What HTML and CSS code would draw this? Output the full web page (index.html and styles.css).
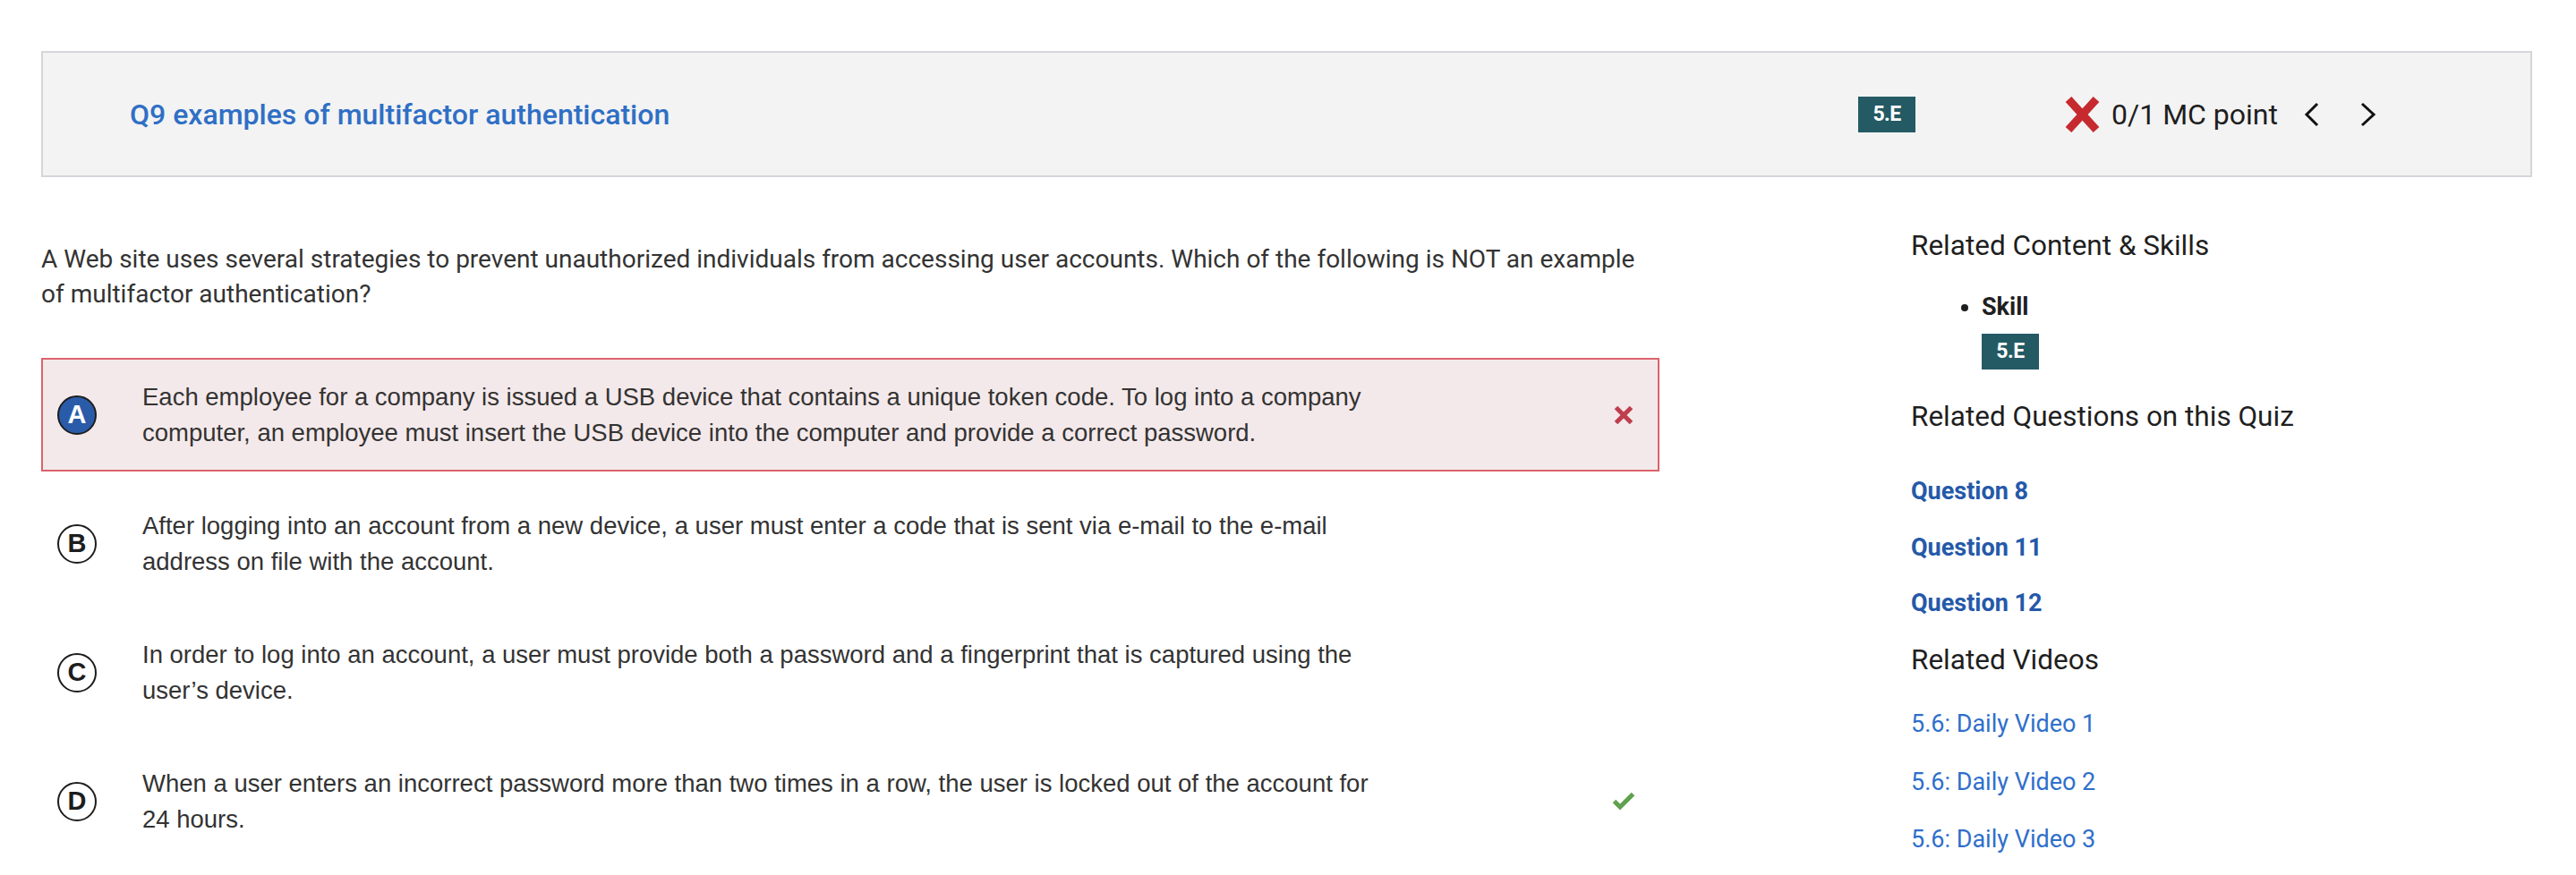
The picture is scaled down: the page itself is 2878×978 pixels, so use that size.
FILE: index.html
```html
<!DOCTYPE html>
<html lang="en">
<head>
<meta charset="utf-8">
<title>Q9 examples of multifactor authentication</title>
<link rel="stylesheet" href="styles.css">
</head>
<body>
<div class="page">
  <header class="qhead">
    <a class="qtitle" href="#">Q9 examples of multifactor authentication</a>
    <span class="badge">5.E</span>
    <div class="score">
      <svg class="score-x" width="39" height="40" viewBox="0 0 39 40"><path d="M4 3 L35 37 M35 3 L4 37" stroke="#c62a2f" stroke-width="9" fill="none"/></svg>
      <span class="score-text">0/1 MC point</span>
      <svg class="chev chev-left" width="21" height="28" viewBox="0 0 21 28"><polyline points="17,2 5,14 17,26" fill="none" stroke="#111" stroke-width="3"/></svg>
      <svg class="chev chev-right" width="18" height="28" viewBox="0 0 18 28"><polyline points="2,2 15,14 2,26" fill="none" stroke="#111" stroke-width="3"/></svg>
    </div>
  </header>

  <div class="content">
    <main class="main">
      <p class="stem">A Web site uses several strategies to prevent unauthorized individuals from accessing user accounts. Which of the following is NOT an example of multifactor authentication?</p>
      <div class="options">
        <div class="option option-wrong">
          <span class="letter letter-selected">A</span>
          <span class="opt-text">Each employee for a company is issued a USB device that contains a unique token code. To log into a company computer, an employee must insert the USB device into the computer and provide a correct password.</span>
          <svg class="mark" width="22" height="22" viewBox="0 0 22 22"><path d="M2.5 2.5 L19.5 19.5 M19.5 2.5 L2.5 19.5" stroke="#bf3e4d" stroke-width="5" fill="none"/></svg>
        </div>
        <div class="option">
          <span class="letter">B</span>
          <span class="opt-text">After logging into an account from a new device, a user must enter a code that is sent via e-mail to the e-mail address on file with the account.</span>
        </div>
        <div class="option">
          <span class="letter">C</span>
          <span class="opt-text">In order to log into an account, a user must provide both a password and a fingerprint that is captured using the user’s device.</span>
        </div>
        <div class="option">
          <span class="letter">D</span>
          <span class="opt-text">When a user enters an incorrect password more than two times in a row, the user is locked out of the account for<br>24 hours.</span>
          <svg class="mark mark-check" width="26" height="22" viewBox="0 0 26 22"><polyline points="2.5,10.5 9,17 23.5,2.5" stroke="#5fa14d" stroke-width="5" fill="none"/></svg>
        </div>
      </div>
    </main>

    <aside class="side">
      <h2 class="side-h">Related Content &amp; Skills</h2>
      <ul class="skills">
        <li>Skill
          <span class="badge badge-side">5.E</span>
        </li>
      </ul>
      <h2 class="side-h side-h2">Related Questions on this Quiz</h2>
      <ul class="links qlinks">
        <li><a href="#">Question 8</a></li>
        <li><a href="#">Question 11</a></li>
        <li><a href="#">Question 12</a></li>
      </ul>
      <h2 class="side-h side-h3">Related Videos</h2>
      <ul class="links vlinks">
        <li><a href="#">5.6: Daily Video 1</a></li>
        <li><a href="#">5.6: Daily Video 2</a></li>
        <li><a href="#">5.6: Daily Video 3</a></li>
      </ul>
    </aside>
  </div>
</div>
</body>
</html>
```

FILE: styles.css
```css
* { box-sizing: border-box; }
html, body { margin: 0; padding: 0; background: #fff; }
body { font-family: Roboto, "Liberation Sans", Arial, sans-serif; color: #333; }
a { text-decoration: none; }

.page { padding: 57px 49px 0 46px; }

.qhead {
  height: 141px;
  display: flex;
  align-items: center;
  background: #f3f3f3;
  border: 2px solid #d5d5da;
  padding: 0 172px 0 97px;
}
.qtitle {
  flex: 1;
  font-size: 32px;
  font-weight: 500;
  color: #2f6fc5;
  line-height: 40px;
}
.badge {
  display: inline-flex;
  align-items: center;
  justify-content: center;
  width: 64px;
  height: 40px;
  background: #245a64;
  color: #fff;
  font-weight: 700;
  font-size: 23px;
  letter-spacing: -0.5px;
}
.score {
  display: flex;
  align-items: center;
  margin-left: 167px;
}
.score-text {
  margin-left: 13px;
  font-size: 32px;
  color: #1e1e1e;
  line-height: 40px;
}
.chev-left { margin-left: 27px; }
.chev-right { margin-left: 44px; }

.content {
  display: flex;
  align-items: flex-start;
}
.main { width: 1808px; flex: none; padding-top: 72px; }
.stem {
  margin: 0;
  font-size: 28px;
  line-height: 39px;
  color: #333;
}
.options {
  margin-top: 52px;
  display: flex;
  flex-direction: column;
  gap: 17px;
}
.option {
  height: 127px;
  display: flex;
  align-items: center;
  border: 2px solid transparent;
  padding: 0 0 0 16px;
}
.option-wrong {
  background: #f4e9ea;
  border-color: #da636c;
}
.letter {
  flex: none;
  width: 44px;
  height: 44px;
  border-radius: 50%;
  border: 2px solid #1d1d1d;
  display: flex;
  align-items: center;
  justify-content: center;
  font-family: "Liberation Sans", Arial, sans-serif;
  font-weight: 700;
  font-size: 29px;
  color: #1d1d1d;
  background: #fff;
}
.letter-selected { background: #2a5ba9; color: #fff; }
.opt-text {
  flex: none;
  width: 1420px;
  margin-left: 51px;
  font-family: "Liberation Sans", Arial, sans-serif;
  font-size: 27.5px;
  line-height: 40px;
  color: #333;
}
.mark { margin-left: auto; margin-right: 27px; flex: none; }
.mark-check { margin-right: 25px; }

.side { margin-left: 281px; padding-top: 58px; flex: 1; }
.side-h {
  margin: 0;
  font-size: 31.5px;
  font-weight: 400;
  line-height: 38px;
  color: #1f1f1f;
}
.skills {
  list-style: disc;
  margin: 31px 0 0 0;
  padding-left: 79px;
  font-size: 27px;
  font-weight: 700;
  line-height: 36px;
  color: #1f1f1f;
}
.badge-side { display: flex; margin-top: 12px; }
.side-h2 { margin-top: 34px; }
.links { list-style: none; margin: 0; padding: 0; font-size: 27px; line-height: 36px; }
.qlinks { margin-top: 46px; }
.qlinks li + li { margin-top: 26.5px; }
.qlinks a { font-weight: 700; color: #2559a9; }
.side-h3 { margin-top: 27px; }
.vlinks { margin-top: 34px; }
.vlinks li + li { margin-top: 28.5px; }
.vlinks a { color: #2f6fcb; }
```
